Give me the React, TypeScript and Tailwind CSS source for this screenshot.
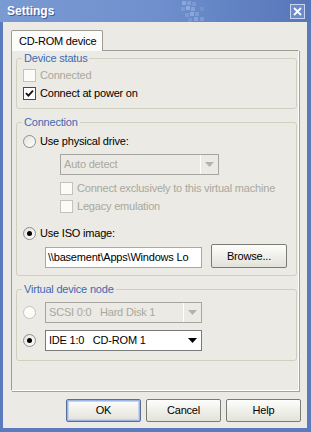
import type { ReactNode } from "react";

function Check({ checked, disabled }: { checked?: boolean; disabled?: boolean }) {
  return (
    <span
      className={
        "w-[13px] h-[13px] shrink-0 border flex items-center justify-center " +
        (disabled ? "border-[#c4c3ba] bg-[#fbfbf9]" : "border-[#4a4a4a] bg-white")
      }
    >
      {checked && (
        <svg width="9" height="9" viewBox="0 0 9 9">
          <path d="M1 4.2 L3.4 6.6 L8 1.6" fill="none" stroke="#111" strokeWidth="1.8" />
        </svg>
      )}
    </span>
  );
}

function Radio({ checked, disabled }: { checked?: boolean; disabled?: boolean }) {
  return (
    <span
      className={
        "w-[13px] h-[13px] shrink-0 rounded-full border flex items-center justify-center " +
        (disabled
          ? "border-[#c4c3bb] bg-[#fcfcfb]"
          : "border-[#8e8e8a] bg-gradient-to-br from-[#e2e2dc] to-white")
      }
    >
      {checked && <span className="w-[5px] h-[5px] rounded-full bg-black" />}
    </span>
  );
}

function Arrow({ color }: { color: string }) {
  return (
    <svg width="9" height="5" viewBox="0 0 9 5">
      <path d="M0 0 H9 L4.5 5 Z" fill={color} />
    </svg>
  );
}

function Select({ text, disabled, width }: { text: string; disabled?: boolean; width: string }) {
  return (
    <div
      className={
        width +
        " h-[21px] border flex items-center " +
        (disabled ? "border-[#a6a59f] bg-[#ebeae4]" : "border-[#7a7a78] bg-white")
      }
    >
      <span
        className={
          "flex-1 pl-[3px] whitespace-pre " + (disabled ? "text-[#a9a89f]" : "text-black")
        }
      >
        {text}
      </span>
      <div
        className={
          "w-[18px] h-full flex items-center justify-center " +
          (disabled ? "border-l border-white" : "")
        }
      >
        <Arrow color={disabled ? "#b4b3ab" : "#000"} />
      </div>
    </div>
  );
}

function Group({ title, className, children }: { title: string; className: string; children: ReactNode }) {
  return (
    <fieldset className={"w-[281px] border border-[#d0d0bf] rounded-[3px] " + className}>
      <legend className="ml-[5px] px-[2px] leading-[13px] text-[#4169b3]">{title}</legend>
      {children}
    </fieldset>
  );
}

function Button({ label, focused, width }: { label: string; focused?: boolean; width: string }) {
  return (
    <button
      className={
        width +
        " h-[23px] rounded-[2px] border bg-gradient-to-b from-[#fdfdfb] to-[#e3e2da] text-black flex items-center justify-center " +
        (focused
          ? "border-[#5b6f93] shadow-[inset_0_0_0_1px_#9ab4e3,inset_0_0_0_2px_#c5d5f0]"
          : "border-[#7b7b76]")
      }
    >
      {label}
    </button>
  );
}

export default function App() {
  return (
    <div className="w-[311px] h-[432px] bg-[#5a7bbe] flex flex-col font-['Liberation_Sans',Arial,sans-serif] text-[11px] leading-[13px] tracking-[-0.2px] text-black select-none">
      <div className="relative h-[22px] shrink-0 flex items-center bg-gradient-to-r from-[#7a9ad3] via-[#6f90cd] to-[#5676b9] pl-[7px] pr-[6px]">
        <span className="text-[12px] font-bold text-white tracking-normal [text-shadow:1px_1px_0_#3d5a9c]">
          Settings
        </span>
        <svg className="absolute left-[178px] top-0" width="40" height="22" viewBox="0 0 40 22">
          <g fill="#a9c0ea">
            <rect x="4" y="1" width="4" height="4" opacity="0.55" />
            <rect x="9" y="1" width="4" height="4" opacity="0.4" />
            <rect x="14" y="2" width="4" height="4" opacity="0.3" />
            <rect x="8" y="6" width="4" height="4" opacity="0.6" />
            <rect x="13" y="7" width="4" height="4" opacity="0.45" />
            <rect x="3" y="7" width="4" height="4" opacity="0.3" />
            <rect x="12" y="12" width="4" height="4" opacity="0.55" />
            <rect x="17" y="12" width="4" height="4" opacity="0.35" />
            <rect x="7" y="13" width="4" height="4" opacity="0.3" />
            <rect x="16" y="17" width="4" height="4" opacity="0.45" />
            <rect x="22" y="17" width="4" height="4" opacity="0.3" />
            <rect x="10" y="18" width="4" height="4" opacity="0.25" />
            <rect x="22" y="7" width="4" height="4" opacity="0.2" />
          </g>
        </svg>
        <div className="ml-auto w-[15px] h-[15px] border border-[#c8d5ef] bg-[#6b8bcc] flex items-center justify-center">
          <svg width="9" height="9" viewBox="0 0 9 9">
            <path d="M1 1 L8 8 M8 1 L1 8" stroke="#fff" strokeWidth="1.8" />
          </svg>
        </div>
      </div>

      <div className="flex-1 ml-[3px] mr-[4px] mb-[4px] bg-[#ebeae4] pt-[8px] pl-[8px] flex flex-col">
        <div className="relative z-10 w-[92px] h-[21px] -mb-[1px] border border-b-0 border-[#9c9b94] rounded-t-[2px] bg-[#fcfcfb] flex items-center pl-[7px]">
          CD-ROM device
        </div>

        <div className="w-[288px] h-[341px] border-t border-l border-[#9c9b94] border-r border-b border-r-white border-b-white shadow-[1px_1px_0_#a3a29b] pl-[4px]">
          <Group title="Device status" className="mt-[1px]">
            <div className="pl-[6px] pt-[4px] pb-[8px] flex flex-col gap-[5px]">
              <div className="h-[13px] flex items-center gap-[4px] text-[#a9a89f]">
                <Check disabled />
                <span>Connected</span>
              </div>
              <div className="h-[13px] flex items-center gap-[4px]">
                <Check checked />
                <span>Connect at power on</span>
              </div>
            </div>
          </Group>

          <Group title="Connection" className="mt-[7px]">
            <div className="pl-[6px] pt-[6px] pb-[7px] flex flex-col">
              <div className="h-[13px] flex items-center gap-[4px]">
                <Radio />
                <span>Use physical drive:</span>
              </div>
              <div className="mt-[6px] pl-[37px]">
                <Select text="Auto detect" disabled width="w-[159px]" />
              </div>
              <div className="mt-[7px] pl-[37px] h-[13px] flex items-center gap-[4px] text-[#a9a89f]">
                <Check disabled />
                <span>Connect exclusively to this virtual machine</span>
              </div>
              <div className="mt-[5px] pl-[37px] h-[13px] flex items-center gap-[4px] text-[#a9a89f]">
                <Check disabled />
                <span>Legacy emulation</span>
              </div>
              <div className="mt-[14px] h-[13px] flex items-center gap-[4px]">
                <Radio checked />
                <span>Use ISO image:</span>
              </div>
              <div className="mt-[4px] pl-[22px] h-[24px] flex items-end gap-[9px]">
                <div className="w-[157px] h-[21px] border border-[#a9a8a2] bg-white flex items-center pl-[2px] overflow-hidden whitespace-nowrap">
                  {"\\\\basement\\Apps\\Windows Lo"}
                </div>
                <Button label="Browse..." width="w-[76px] h-[24px]" />
              </div>
            </div>
          </Group>

          <Group title="Virtual device node" className="mt-[7px]">
            <div className="pl-[6px] pt-[6px] pb-[9px] flex flex-col gap-[7px]">
              <div className="flex items-center gap-[9px]">
                <Radio disabled />
                <Select text="SCSI 0:0   Hard Disk 1" disabled width="w-[157px]" />
              </div>
              <div className="flex items-center gap-[9px]">
                <Radio checked />
                <Select text="IDE 1:0   CD-ROM 1" width="w-[157px]" />
              </div>
            </div>
          </Group>
        </div>

        <div className="mt-[8px] pr-[6px] flex justify-end gap-[5px]">
          <Button label="OK" focused width="w-[75px]" />
          <Button label="Cancel" width="w-[75px]" />
          <Button label="Help" width="w-[75px]" />
        </div>
      </div>
    </div>
  );
}
